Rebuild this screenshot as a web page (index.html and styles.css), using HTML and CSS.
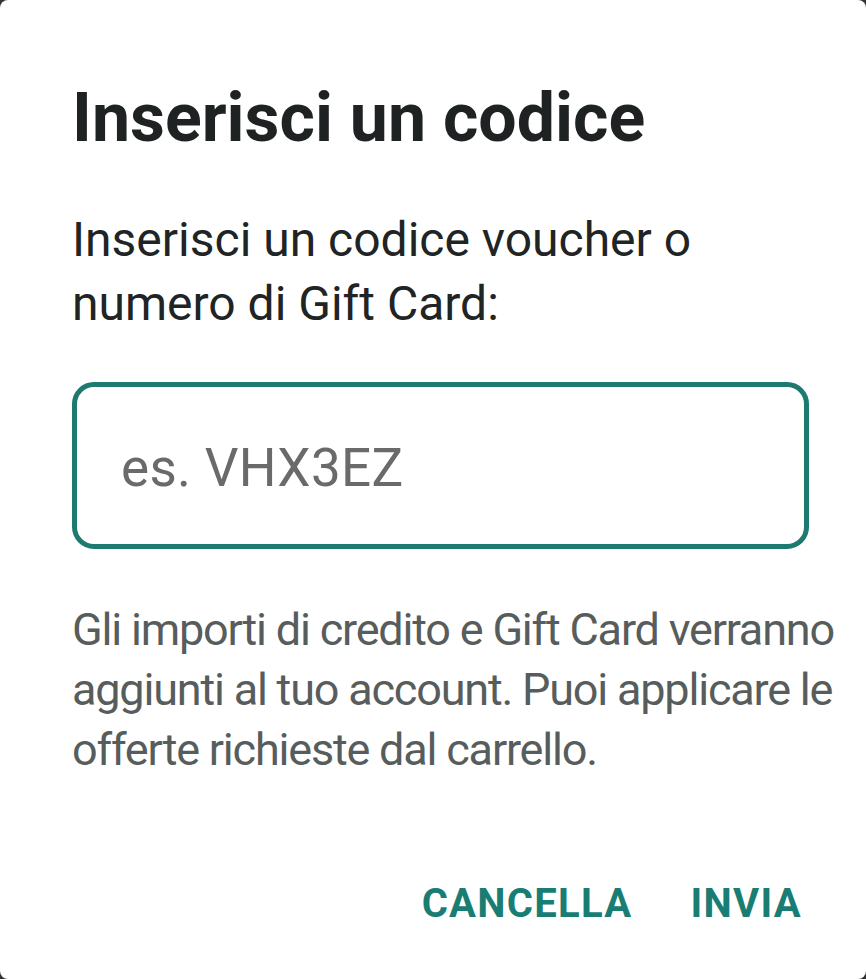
FILE: index.html
```html
<!DOCTYPE html>
<html lang="it">
  <head>
    <meta charset="UTF-8" />
    <meta name="viewport" content="width=device-width, initial-scale=1.0" />
    <link rel="stylesheet" href="styles.css">
    <title>Inserisci un codice</title>
  </head>
  <body>
    <div class="dialog">
      <h1 class="title">Inserisci un codice</h1>
      <p class="lead">Inserisci un codice voucher o numero di Gift Card:</p>
      <div class="field">
        <input class="code" type="text" placeholder="es. VHX3EZ" />
      </div>
      <p class="note">Gli importi di credito e Gift Card verranno aggiunti al tuo account. Puoi applicare le offerte richieste dal carrello.</p>
      <div class="actions">
        <button class="btn">CANCELLA</button>
        <button class="btn">INVIA</button>
      </div>
    </div>
  </body>
</html>
```

FILE: styles.css
```css
html {
  background: #333;
}
body {
  margin: 0;
  font-family: Roboto, "Liberation Sans", sans-serif;
}
.dialog {
  box-sizing: border-box;
  height: 979px;
  background: #fff;
  border-radius: 8px;
  padding: 80px 20px 0 72px;
}
.title {
  margin: 0;
  font-size: 68px;
  line-height: 76px;
  font-weight: 700;
  color: #1f2222;
}
.lead {
  margin: 52px 0 0;
  width: 640px;
  font-size: 48px;
  line-height: 64px;
  color: #212424;
}
.field {
  margin-top: 46px;
  width: 737px;
}
.code {
  box-sizing: border-box;
  width: 100%;
  height: 167px;
  border: 5px solid #1e7a70;
  border-radius: 22px;
  padding: 4px 0 0 44px;
  font-family: Roboto, sans-serif;
  font-size: 53px;
  letter-spacing: 0.3px;
  outline: none;
}
.code::placeholder {
  color: #6a6a6a;
}
.note {
  margin: 51px 0 0;
  font-size: 45px;
  line-height: 60px;
  letter-spacing: -1.2px;
  color: #575c5c;
}
.actions {
  display: flex;
  justify-content: flex-end;
  gap: 58px;
  margin-top: 100px;
  padding-right: 44px;
}
.btn {
  border: 0;
  background: none;
  padding: 0;
  font-family: Roboto, sans-serif;
  font-size: 40px;
  font-weight: 700;
  letter-spacing: 1.3px;
  color: #1a7d74;
}
```
